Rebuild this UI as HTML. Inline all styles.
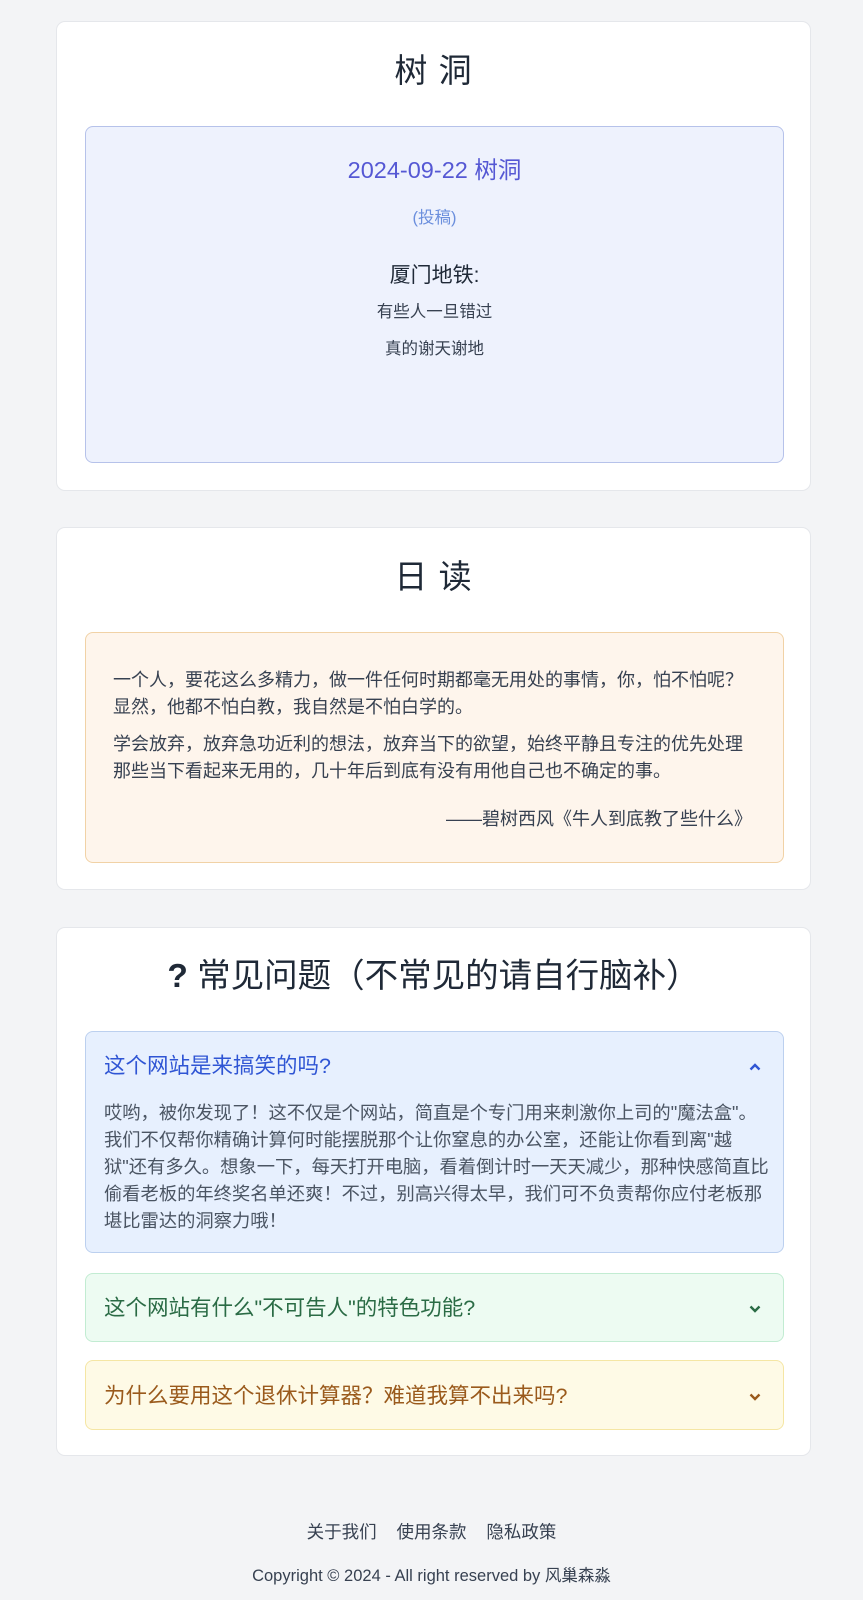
<!DOCTYPE html>
<html><head><meta charset="utf-8"><style>
*{box-sizing:border-box;margin:0;padding:0}
body{width:863px;height:1600px;background:#f3f4f6;font-family:"Liberation Sans","Noto Sans CJK SC",sans-serif;color:#1f2937;position:relative;overflow:hidden}
.card{position:absolute;left:56px;width:755px;background:#fff;border:1px solid #e5e7eb;border-radius:9px}
.a{position:absolute;left:0;width:100%;text-align:center;white-space:nowrap}
.box{position:absolute;left:28px;width:699px;border-radius:8px;border:1px solid}
.q{position:absolute;left:18px;font-size:21.5px;line-height:30px;white-space:nowrap}
.chev{position:absolute;right:22px}
</style></head><body>

<div class="card" style="top:21px;height:470px">
<div class="a" style="top:29px;font-size:33px;line-height:40px;letter-spacing:1px">树 洞</div>
<div class="box" style="top:104px;height:337px;background:#eef2fd;border-color:#b6c2ea">
<div class="a" style="top:28px;font-size:23.5px;line-height:30px;color:#5558d4">2024-09-22 树洞</div>
<div class="a" style="top:79px;font-size:16.5px;line-height:24px;color:#6b8fdd">(投稿)</div>
<div class="a" style="top:134px;font-size:21px;line-height:30px;color:#1f2937">厦门地铁:</div>
<div class="a" style="top:173px;font-size:16.5px;line-height:24px;color:#374151">有些人一旦错过</div>
<div class="a" style="top:210px;font-size:16.5px;line-height:24px;color:#374151">真的谢天谢地</div>
</div>
</div>

<div class="card" style="top:527px;height:363px">
<div class="a" style="top:29px;font-size:33px;line-height:40px;letter-spacing:1px">日 读</div>
<div class="box" style="top:104px;height:231px;background:#fef5ec;border-color:#f1d2a6;padding:34px 27px 0;font-size:18px;line-height:26.5px;color:#374151">
<p>一个人，要花这么多精力，做一件任何时期都毫无用处的事情，你，怕不怕呢？显然，他都不怕白教，我自然是不怕白学的。</p>
<p style="margin-top:11px">学会放弃，放弃急功近利的想法，放弃当下的欲望，始终平静且专注的优先处理那些当下看起来无用的，几十年后到底有没有用他自己也不确定的事。</p>
<p style="text-align:right;margin-top:22px;padding-right:4px">——碧树西风《牛人到底教了些什么》</p>
</div>
</div>

<div class="card" style="top:927px;height:529px">
<div class="a" style="top:28px;font-size:33.5px;line-height:42px"><b style="font-weight:900">?</b> 常见问题（不常见的请自行脑补）</div>
<div class="box" style="top:103px;height:222px;background:#e7f0fe;border-color:#bcd0ef">
<div class="q" style="color:#2f55d4;top:19px">这个网站是来搞笑的吗?</div>
<svg class="chev" width="12" height="8" viewBox="0 0 12 8" style="top:31px"><path d="M1.5 6.5L6 2l4.5 4.5" fill="none" stroke="#2f55d4" stroke-width="2.4"/></svg>
<div style="position:absolute;left:18px;top:67px;width:665px;font-size:18.3px;line-height:27px;color:#4b5563">哎哟，被你发现了！这不仅是个网站，简直是个专门用来刺激你上司的"魔法盒"。我们不仅帮你精确计算何时能摆脱那个让你窒息的办公室，还能让你看到离"越狱"还有多久。想象一下，每天打开电脑，看着倒计时一天天减少，那种快感简直比偷看老板的年终奖名单还爽！不过，别高兴得太早，我们可不负责帮你应付老板那堪比雷达的洞察力哦！</div>
</div>
<div class="box" style="top:345px;height:69px;background:#edfbf2;border-color:#c2ecd2">
<div class="q" style="color:#2a6b45;top:19px">这个网站有什么"不可告人"的特色功能?</div>
<svg class="chev" width="12" height="8" viewBox="0 0 12 8" style="top:31px"><path d="M1.5 1.5L6 6l4.5-4.5" fill="none" stroke="#2a6b45" stroke-width="2.4"/></svg>
</div>
<div class="box" style="top:432px;height:70px;background:#fefae6;border-color:#f5e6a4">
<div class="q" style="color:#9a5a1c;top:20px">为什么要用这个退休计算器？难道我算不出来吗?</div>
<svg class="chev" width="12" height="8" viewBox="0 0 12 8" style="top:32px"><path d="M1.5 1.5L6 6l4.5-4.5" fill="none" stroke="#9a5a1c" stroke-width="2.4"/></svg>
</div>
</div>

<div class="a" style="top:1520px;font-size:17.5px;line-height:24px;color:#374151;word-spacing:15px">关于我们 使用条款 隐私政策</div>
<div class="a" style="top:1566px;font-size:16.5px;line-height:20px;color:#374151">Copyright © 2024 - All right reserved by 风巢森淼</div>
</body></html>
